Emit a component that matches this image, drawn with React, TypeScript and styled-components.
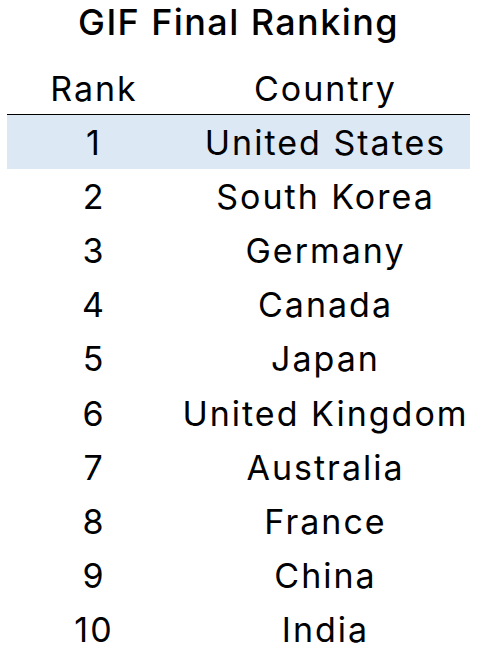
import React from "react";
import styled, { createGlobalStyle } from "styled-components";

const GlobalStyle = createGlobalStyle`
  html, body {
    margin: 0;
    padding: 0;
    background: #ffffff;
  }
  body {
    font-family: Inter, "Noto Sans", sans-serif;
    color: #000000;
  }
`;

const Page = styled.div`
  width: 484px;
  height: 662px;
  padding: 0 14px 0 7px;
  box-sizing: border-box;
`;

const Title = styled.h1`
  margin: 0;
  height: 62px;
  padding-top: 1px;
  box-sizing: border-box;
  font-size: 36px;
  font-weight: 500;
  letter-spacing: 1.4px;
  text-align: center;
  line-height: 42px;
`;

const Table = styled.table`
  width: 463px;
  border-collapse: collapse;
  table-layout: fixed;
`;

const HeadCell = styled.th<{ $w: number }>`
  width: ${(p) => p.$w}px;
  height: 52px;
  font-weight: 400;
  font-size: 34px;
  letter-spacing: 2px;
  text-align: center;
  vertical-align: middle;
  border-bottom: 1px solid #000000;
  padding: 0;
`;

const Row = styled.tr<{ $active?: boolean }>`
  background: ${(p) => (p.$active ? "#dde8f5" : "transparent")};
`;

const Cell = styled.td`
  height: 54.2px;
  font-size: 34px;
  letter-spacing: 2px;
  text-align: center;
  vertical-align: middle;
  padding: 0;
  white-space: nowrap;
`;

const countries = [
  "United States",
  "South Korea",
  "Germany",
  "Canada",
  "Japan",
  "United Kingdom",
  "Australia",
  "France",
  "China",
  "India",
];

export default function App() {
  return (
    <Page>
      <GlobalStyle />
      <Title>GIF Final Ranking</Title>
      <Table>
        <thead>
          <tr>
            <HeadCell $w={174}>Rank</HeadCell>
            <HeadCell $w={289}>Country</HeadCell>
          </tr>
        </thead>
        <tbody>
          {countries.map((c, i) => (
            <Row key={c} $active={i === 0}>
              <Cell>{i + 1}</Cell>
              <Cell>{c}</Cell>
            </Row>
          ))}
        </tbody>
      </Table>
    </Page>
  );
}
